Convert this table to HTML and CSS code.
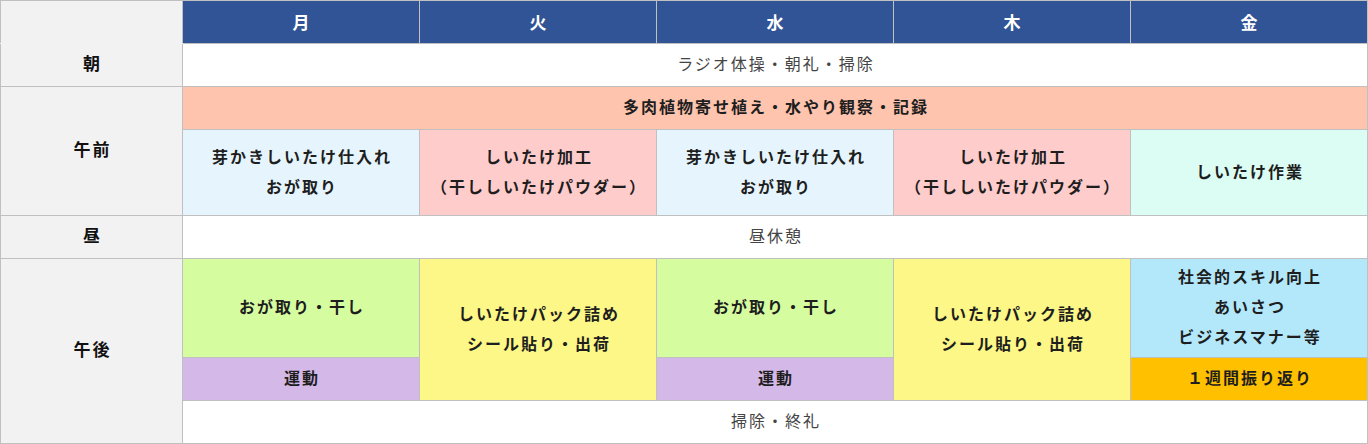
FILE: index.html
```html
<!DOCTYPE html>
<html lang="ja">
<head>
<meta charset="utf-8">
<title>時間割</title>
<link rel="stylesheet" href="styles.css">
</head>
<body>
<table class="tt">
  <colgroup>
    <col class="c-label">
    <col class="c-day"><col class="c-day"><col class="c-day"><col class="c-day"><col class="c-day">
  </colgroup>
  <tr class="r43">
    <td class="label corner"></td>
    <th class="day">月</th>
    <th class="day">火</th>
    <th class="day">水</th>
    <th class="day">木</th>
    <th class="day">金</th>
  </tr>
  <tr class="r43">
    <td class="label">朝</td>
    <td class="plain" colspan="5">ラジオ体操・朝礼・掃除</td>
  </tr>
  <tr class="r43">
    <td class="label" rowspan="2">午前</td>
    <td class="b orange" colspan="5">多肉植物寄せ植え・水やり観察・記録</td>
  </tr>
  <tr class="r86">
    <td class="b am lightblue">芽かきしいたけ仕入れ<br>おが取り</td>
    <td class="b am pink">しいたけ加工<br>（干ししいたけパウダー）</td>
    <td class="b am lightblue">芽かきしいたけ仕入れ<br>おが取り</td>
    <td class="b am pink">しいたけ加工<br>（干ししいたけパウダー）</td>
    <td class="b am mint">しいたけ作業</td>
  </tr>
  <tr class="r43">
    <td class="label">昼</td>
    <td class="plain" colspan="5">昼休憩</td>
  </tr>
  <tr class="r99">
    <td class="label" rowspan="3">午後</td>
    <td class="b green">おが取り・干し</td>
    <td class="b yellow" rowspan="2">しいたけパック詰め<br>シール貼り・出荷</td>
    <td class="b green">おが取り・干し</td>
    <td class="b yellow" rowspan="2">しいたけパック詰め<br>シール貼り・出荷</td>
    <td class="b sky">社会的スキル向上<br>あいさつ<br>ビジネスマナー等</td>
  </tr>
  <tr class="r43">
    <td class="b purple">運動</td>
    <td class="b purple">運動</td>
    <td class="b amber">１週間振り返り</td>
  </tr>
  <tr class="r43">
    <td class="plain" colspan="5">掃除・終礼</td>
  </tr>
</table>
</body>
</html>
```

FILE: styles.css
```css
html, body {
  margin: 0;
  padding: 0;
  background: #ffffff;
}

body {
  font-family: "Noto Sans CJK JP", "Noto Sans", sans-serif;
  font-size: 16px;
  color: #222222;
}

.tt {
  border-collapse: collapse;
  table-layout: fixed;
  width: 1368px;
}

.c-label { width: 182px; }
.c-day { width: 237px; }

.tt td,
.tt th {
  border: 1px solid #c0c0c0;
  padding: 0 0 0 2px;
  text-align: center;
  vertical-align: middle;
  line-height: 30px;
  letter-spacing: 2px;
}

.tt td {
  padding-bottom: 4px;
}

.r43 { height: 43px; }
.r86 { height: 86px; }
.r99 { height: 99px; }

.label {
  background: #f2f2f2;
  font-weight: 700;
  color: #111111;
  font-size: 17px;
}

.corner {
  border-bottom-color: #f2f2f2 !important;
}

.day {
  background: #305496;
  color: #ffffff;
  font-weight: 700;
  font-size: 17px;
}

.plain {
  background: #ffffff;
  color: #444444;
  font-weight: 400;
  letter-spacing: 1.6px;
}

.b {
  font-weight: 700;
  color: #1e1e1e;
}

.am { line-height: 28px; }

.orange { background: #fec4ae; }
.lightblue { background: #e6f5fd; }
.pink { background: #ffcccc; }
.mint { background: #dcfdf3; }
.green { background: #d6fca0; }
.yellow { background: #fcf786; }
.sky { background: #b3e8fb; }
.purple { background: #d4b8e8; }
.amber { background: #ffc000; }
```
